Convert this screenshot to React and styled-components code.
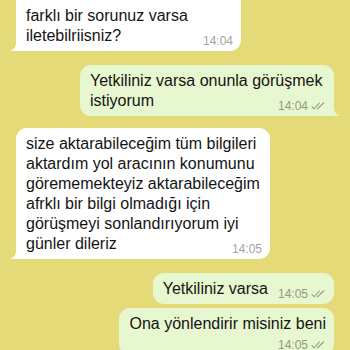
import React from "react";
import styled, { createGlobalStyle } from "styled-components";

const Global = createGlobalStyle`
  html, body {
    margin: 0;
    padding: 0;
    background: #e4da77;
    overflow: hidden;
  }
  body {
    font-family: "Liberation Sans", Arial, sans-serif;
  }
`;

const Chat = styled.div`
  display: flex;
  flex-direction: column;
  width: 350px;
  height: 350px;
  box-sizing: border-box;
  padding: 0 16px;
  overflow: hidden;
  background: #e4da77;
`;

const Row = styled.div`
  display: flex;
  flex-shrink: 0;
  justify-content: ${p => (p.$out ? "flex-end" : "flex-start")};
  margin-top: ${p => p.$gap}px;
`;

const Bubble = styled.div`
  position: relative;
  display: flow-root;
  box-sizing: border-box;
  max-width: 254px;
  width: ${p => (p.$w ? `${p.$w}px` : "auto")};
  padding: 6px 8px 3px 10px;
  border-radius: 11px;
  background: ${p => (p.$out ? "#e7f7cf" : "#ffffff")};
  color: #141414;
  font-size: 16px;
  line-height: 20px;
  ${p =>
    p.$tail &&
    (p.$out ? "border-bottom-right-radius: 4px;" : "border-bottom-left-radius: 4px;")}
`;

const Meta = styled.span`
  float: ${p => (p.$stack ? "none" : "right")};
  display: flex;
  justify-content: flex-end;
  align-items: center;
  gap: 3px;
  margin: ${p => (p.$stack ? "4px 0 0 0" : "8px 0 0 10px")};
  font-size: 12px;
  line-height: 14px;
  color: ${p => (p.$out ? "#8e9a87" : "#a3a3a3")};
`;

const Tail = styled.svg`
  position: absolute;
  bottom: 0;
  ${p => (p.$out ? "right: -6px; transform: scaleX(-1);" : "left: -6px;")}
`;

const Ticks = () => (
  <svg width="15" height="8" viewBox="0 0 15 8" fill="none" stroke="#8e9a87" strokeWidth="1.1" strokeLinecap="round">
    <path d="M1 4.6 L3.2 6.8 L8.4 1" />
    <path d="M6.4 6.8 L12.6 1" />
  </svg>
);

const Message = ({ out, gap, tail, time, w, read, stack, children }) => (
  <Row $out={out} $gap={gap}>
    <Bubble $out={out} $tail={tail} $w={w}>
      {children}
      <Meta $out={out} $stack={stack}>
        {time}
        {read && <Ticks />}
      </Meta>
      {tail && (
        <Tail $out={out} width="14" height="14" viewBox="0 0 14 14">
          <path d="M6 0 L6 6 C6 10 4 12.5 0 14 L14 14 L14 0 Z" fill={out ? "#e7f7cf" : "#ffffff"} />
        </Tail>
      )}
    </Bubble>
  </Row>
);

export default function App() {
  return (
    <>
      <Global />
      <Chat>
        <Message gap={-20} tail time="14:04" w={225}>
          <br />
          farklı bir sorunuz varsa iletebilriisniz?
        </Message>
        <Message out gap={14} tail time="14:04" read>
          Yetkiliniz varsa onunla görüşmek istiyorum
        </Message>
        <Message gap={12} tail time="14:05">
          size aktarabileceğim tüm bilgileri aktardım yol aracının konumunu
          görememekteyiz aktarabileceğim afrklı bir bilgi olmadığı için
          görüşmeyi sonlandırıyorum iyi günler dileriz
        </Message>
        <Message out gap={14} time="14:05" read>
          Yetkiliniz varsa
        </Message>
        <Message out gap={4} time="14:05" read stack>
          Ona yönlendirir misiniz beni
        </Message>
      </Chat>
    </>
  );
}
